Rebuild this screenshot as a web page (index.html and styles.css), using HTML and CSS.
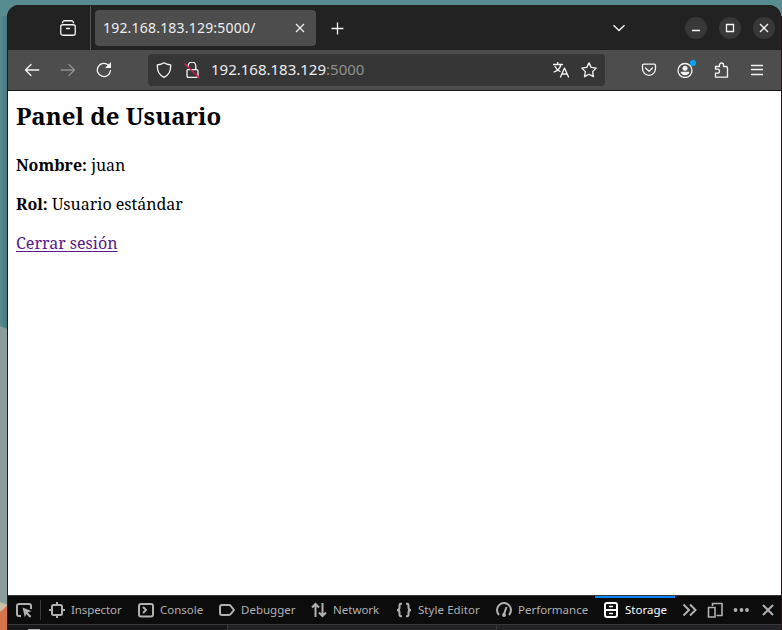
FILE: index.html
```html
<!DOCTYPE html>
<html lang="es">
<head>
<meta charset="utf-8">
<title>Panel de Usuario</title>
<link rel="stylesheet" href="styles.css">
</head>
<body>
<svg class="wallpaper" viewBox="0 0 8 630" aria-hidden="true"><path fill="#8a9c9b" d="M0 326l8 3v301H0z"/><path fill="#c9c0a6" d="M0 602l8 3v25H0z"/><path fill="#d5734a" d="M0 612l8-7v25H0z"/></svg>
<div class="window">
  <header class="tabs">
    <div class="view"><svg class="i" viewBox="0 0 16 16"><rect x=".75" y="4.75" width="14.5" height="10.5" rx="2"/><path d="M2.5 2.8Q2.7.75 4.5.75h7q1.800 0 2 2.050M6.500 8.500h3"/></svg></div>
    <div class="tab"><span class="title">192.168.183.129:5000/</span><svg class="close" viewBox="0 0 10 10"><path d="M1 1l8 8M9 1L1 9"/></svg></div>
    <svg class="plus" viewBox="0 0 13 13"><path d="M6.500 .5v12M.5 6.500h12"/></svg>
    <svg class="down" viewBox="0 0 12 8"><path d="M.5 1.2L6 6.500l5.500-5.300"/></svg>
    <div class="controls">
      <span><svg viewBox="0 0 22 22"><path d="M7 13.500h8"/></svg></span>
      <span><svg viewBox="0 0 22 22"><path d="M7.500 7.500h7v7h-7z"/></svg></span>
      <span><svg viewBox="0 0 22 22"><path d="M7 7l8 8M15 7l-8 8"/></svg></span>
    </div>
  </header>
  <nav class="nav">
    <svg class="i" viewBox="0 0 16 16"><path d="M14.800 8H1.500M7 2.500L1.500 8 7 13.500"/></svg>
    <svg class="i dim" viewBox="0 0 16 16"><path d="M1.200 8h13.300M9 2.500L14.500 8 9 13.500"/></svg>
    <svg class="i" viewBox="0 0 16 16"><path d="M14.500 8.500a6.600 6.600 0 1 1-2-5.300"/><path class="solid" d="M15 0v6H9z"/></svg>
    <div class="address">
      <svg class="i" viewBox="0 0 16 16"><path d="M8 .8c2 1.600 4.300 2 6.700 2.200C14.900 9 13 13.200 8 15.300 3 13.200 1.100 9 1.300 3 3.700 2.800 6 2.400 8 .8z"/></svg>
      <svg class="i lock" viewBox="0 0 16 16"><path d="M4.200 5V4a3.800 3.800 0 0 1 7.600 0v3M3.500 7.700h9q1.500 0 1.500 1.500v4.600q0 1.500-1.500 1.500h-8q-1.500 0-1.500-1.500V8.200"/><path class="slash" d="M1 2l14 13.500"/></svg>
      <span class="url">192.168.183.129<b>:5000</b></span>
      <svg class="i translate" viewBox="0 0 16 16"><path d="M.5 2.500h9M4.700 .5v2M2 4.500Q3.800 8 7 9.500M8 2.700Q6.500 8 1 10M7.500 15L11.500 6l4 9M9 12h5"/></svg>
      <svg class="i" viewBox="0 0 16 16"><path d="M8 .9l2.200 4.500 5 .7-3.600 3.500.9 5L8 12.200l-4.500 2.400.9-5L.8 6.100l5-.7z"/></svg>
    </div>
    <svg class="i pocket" viewBox="0 0 16 16"><path d="M2.700 2.200h10.600q1.200 0 1.200 1.200v3.400a6.500 6.500 0 0 1-13 0V3.400q0-1.200 1.200-1.200zM4.500 6L8 9.300 11.500 6"/></svg>
    <div class="account"><svg class="i" viewBox="0 0 16 16"><circle cx="8" cy="8.500" r="7"/><circle class="solid" cx="8" cy="6.300" r="2.500"/><path class="solid" d="M3.500 9.800h9q-.8 3.400-4.500 3.500-3.700-.1-4.500-3.500z"/></svg><i></i></div>
    <svg class="i puzzle" viewBox="0 0 16 16"><path d="M1.500 4.500h4V3a2 2 0 0 1 4 0v1.500H12q1.500 0 1.500 1.500v9.200h-12v-4h2a2 2 0 0 0 0-4h-2z"/></svg>
    <svg class="i" viewBox="0 0 16 16"><path d="M2.500 3.500h11M2.500 7.500h11M2.500 12.500h11"/></svg>
  </nav>
  <main class="page">
    <h2>Panel de Usuario</h2>
    <p><strong>Nombre:</strong> juan</p>
    <p><strong>Rol:</strong> Usuario estándar</p>
    <a href="#">Cerrar sesión</a>
  </main>
  <footer class="tools">
    <div class="pick"><svg class="t" viewBox="0 0 16 16"><path d="M5 14H3q-2 0-2-2V4q0-2 2-2h10q2 0 2 2v3"/><path class="solid" d="M6.500 5.500l9 3.500-3.700 1.500 3.500 3.700-1.500 1.500-3.600-3.700-1.300 3.500z"/></svg></div>
    <div class="tool inspector"><svg class="t" viewBox="0 0 16 16"><rect x="3" y="3" width="10" height="10" rx="1.500"/><path d="M8 0v3M8 13v3M0 8h3M13 8h3"/></svg><span>Inspector</span></div>
    <div class="tool console"><svg class="t" viewBox="0 0 16 16"><rect x="1" y="2" width="14" height="12.500" rx="2"/><path d="M5 5l3 3-3 3"/></svg><span>Console</span></div>
    <div class="tool debugger"><svg class="t" viewBox="0 0 16 16"><path d="M3 3h7q1 0 1.700.8L15 8l-3.300 4.200q-.7.800-1.700.8H3q-2 0-2-2V5q0-2 2-2z"/></svg><span>Debugger</span></div>
    <div class="tool network"><svg class="t" viewBox="0 0 16 16"><path d="M4.500 15V2M1 5.500L4.500 2 8 5.500M11.500 1v13M8 10.500l3.500 3.500 3.500-3.500"/></svg><span>Network</span></div>
    <div class="tool style"><svg class="t" viewBox="0 0 16 16"><path d="M6 1.800H5Q3.500 1.800 3.500 3.500v2Q3.500 8 1 8q2.500 0 2.500 2.500v2Q3.500 14.200 5 14.200h1M10 1.800h1q1.500 0 1.500 1.700v2Q12.500 8 15 8q-2.500 0-2.500 2.500v2q0 1.700-1.500 1.700h-1"/></svg><span>Style Editor</span></div>
    <div class="tool performance"><svg class="t" viewBox="0 0 16 16"><path d="M3 13a7 7 0 1 1 10 0M8 12l2.500-7"/><circle class="solid" cx="8" cy="13" r="2"/></svg><span>Performance</span></div>
    <div class="tool storage"><svg class="t" viewBox="0 0 16 16"><rect x="2" y="1" width="12" height="14" rx="2"/><path d="M2 8h12"/><path class="thin" d="M6 4.500h4M6 11.500h4"/></svg><span>Storage</span></div>
    <div class="more">
      <svg class="t" viewBox="0 0 16 16"><path d="M2.500 2.500L8 8l-5.500 5.500M9 2.500L14.500 8 9 13.500"/></svg>
      <svg class="t resp" viewBox="0 0 16 16"><path d="M5.500 4V1.500H15v12H9.500M1.500 5.500h6.500V15H1.500z"/></svg>
      <svg class="t" viewBox="0 0 16 16"><g class="solid"><circle cx="2.500" cy="8" r="1.900"/><circle cx="8.500" cy="8" r="1.900"/><circle cx="14" cy="8" r="1.900"/></g></svg>
      <svg class="t" viewBox="0 0 16 16"><path d="M4 3l10 10M14 3L4 13"/></svg>
    </div>
  </footer>
  <div class="panel"><div class="tree"><i></i></div><div class="column"></div></div>
</div>
</body>
</html>
```
FILE: styles.css
```css
* { box-sizing: border-box; }
body {
  margin: 0; width: 782px; height: 630px; overflow: hidden; position: relative;
  padding: 5px 1px 0 7px;
  background:
    linear-gradient(#578c91, #578c91) 0 0 / 782px 16px no-repeat,
    linear-gradient(90deg, #578c91 0, #46777c 7px, #271618 8px);
  font-family: "Noto Sans", sans-serif;
}
.wallpaper { position: absolute; left: 0; top: 0; width: 8px; height: 630px; stroke: none; }
.window { position: relative; height: 625px; border-left: 1px solid #181c1d; border-radius: 12px 12px 0 0; overflow: hidden; background: #222; }
svg { display: block; flex: none; fill: none; }
.window svg { stroke: #f4f4f4; stroke-width: 1.4; }
.window .i { width: 16px; height: 16px; stroke-linejoin: round; stroke-linecap: round; stroke-width: 1.3; }
.window .solid { fill: #f4f4f4; stroke: none; }
.tabs { height: 45px; display: flex; align-items: center; background: #222; }
.view { width: 83px; height: 44px; margin-top: 1px; padding: 14px 0 0 52px; border-right: 1px solid #555; }
.tab { width: 221px; height: 36px; margin-left: 4px; padding: 0 11px 0 8px; border-radius: 4px; background: #4d4d4d; display: flex; align-items: center; justify-content: space-between; }
.title { color: #ededf0; font-size: 14px; line-height: 20px; letter-spacing: .2px; white-space: nowrap; }
.window .close { width: 10px; height: 10px; stroke-width: 1.1; }
.window .plus { width: 13px; height: 13px; margin: 2px 0 0 15px; stroke-width: 1.3; }
.down { width: 12px; height: 8px; margin-left: 269px; }
.controls { display: flex; gap: 12px; margin-left: 60px; }
.controls span { width: 22px; height: 22px; border-radius: 50%; background: #383838; }
.window .controls svg { width: 22px; height: 22px; stroke-width: 1.3; }
.nav { height: 41px; display: flex; align-items: center; padding-left: 16px; gap: 20px; background: #4d4d4d; border-bottom: 1px solid #151515; }
.dim { opacity: .4; }
.address { width: 457px; height: 32px; margin-left: 16px; margin-right: 16px; padding: 0 8px; border-radius: 4px; background: #363636; display: flex; align-items: center; }
.lock { margin-left: 12px; }
.window .slash { stroke: #d81c4b; }
.url { color: #ededf0; font-size: 15px; line-height: 20px; margin: 0 0 2px 11px; white-space: nowrap; }
.url b { color: #909090; font-weight: 400; }
.translate { margin: 0 12px 0 auto; }
.account { position: relative; }
.account i { position: absolute; top: -2px; right: -3px; width: 6px; height: 6px; border-radius: 50%; background: #00a8f5; }
.puzzle { margin: 0 -1px 0 1px; }
.page { height: 504px; padding: 9px 8px; background: #fff; color: #000; font: 16px/22px "Noto Serif", "DejaVu Serif", serif; }
.page h2 { font-size: 24px; line-height: 32px; margin: 0 0 22px; }
.page p { margin: 0 0 17px; }
.page a { color: #551a8b; text-underline-offset: 2px; }
.tools { height: 30px; display: flex; align-items: stretch; background: #0c0c0d; border-top: 1px solid #38383d; border-bottom: 1px solid #38383d; color: #b1b1b3; font-size: 11.5px; }
.tools .t { width: 16px; height: 16px; stroke: #b1b1b3; stroke-width: 2; }
.tools .resp { stroke-width: 1.6; }
.tools .solid { fill: #b1b1b3; stroke: none; }
.pick { width: 33px; height: 20px; margin-top: 4px; padding-left: 8px; display: flex; align-items: center; border-right: 1px solid #38383d; }
.tool { display: flex; align-items: center; gap: 6px; padding-left: 8px; white-space: nowrap; }
.tool span { position: relative; top: -.5px; }
.inspector { width: 89px; letter-spacing: -.1px; }
.console { width: 81px; }
.debugger { width: 92px; }
.network { width: 85px; }
.style { width: 100px; letter-spacing: .06px; }
.performance { width: 107px; }
.storage { width: 80px; color: #fff; border-top: 2px solid #0a84ff; padding-bottom: 2px; }
.tools .storage .t { stroke: #fff; }
.tools .thin { stroke-width: 1.5; }
.more { display: flex; align-items: center; gap: 10px; margin-left: 6px; }
.panel { height: 5px; display: flex; background: #232327; }
.tree { width: 220px; background: #18181a; border-right: 1px solid #38383d; padding: 4px 0 0 20px; }
.tree i { display: block; width: 12px; height: 1px; background: #b1b1b3; }
.column { width: 269px; border-right: 1px solid #38383d; }
```
